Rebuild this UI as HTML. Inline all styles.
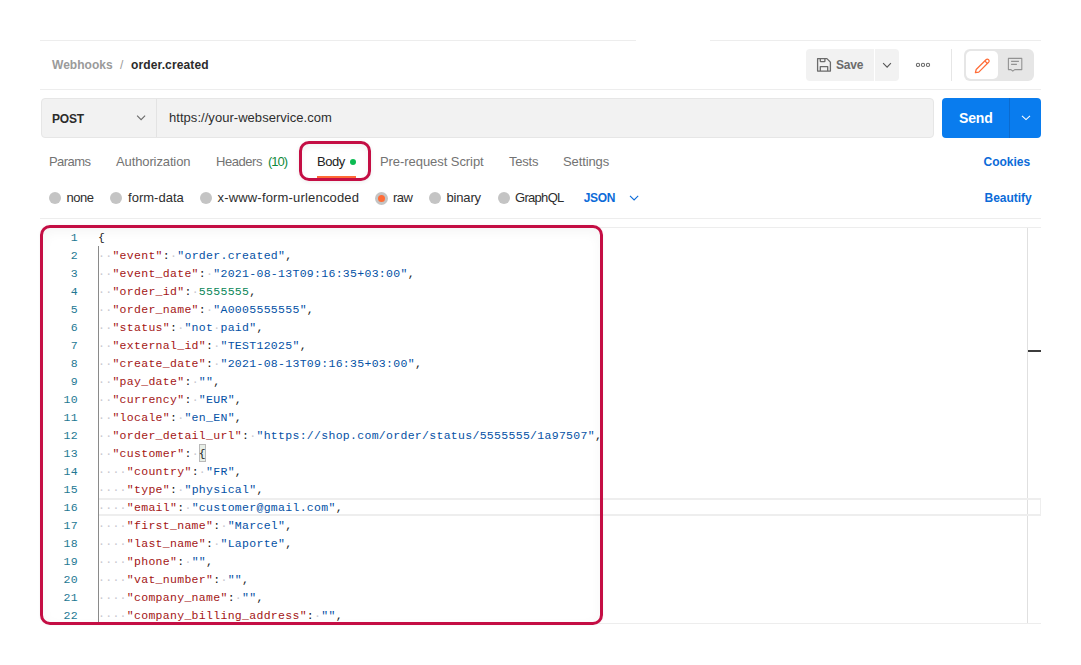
<!DOCTYPE html>
<html><head><meta charset="utf-8">
<style>
html,body{margin:0;padding:0;}
body{width:1081px;height:665px;overflow:hidden;background:#fff;position:relative;font-family:"Liberation Sans",sans-serif;}
.a{position:absolute;}
.t{position:absolute;white-space:pre;line-height:0;height:0;}
.hl{position:absolute;height:1px;background:#ededed;}
.radio{position:absolute;width:12px;height:12px;border-radius:50%;background:#c4c4c4;}
.ln{position:absolute;left:40px;width:38px;text-align:right;height:18px;line-height:18px;font:11.5px "Liberation Mono",monospace;letter-spacing:0.3px;color:#237893;}
.cl{position:absolute;left:98px;height:18px;line-height:18px;font:11.5px "Liberation Mono",monospace;letter-spacing:0.3px;white-space:pre;color:#212121;}
.k{color:#a31515;}
.s{color:#0451a5;}
.n{color:#098658;}
.p{color:#212121;}
.ws{color:#c8c8d0;}
.pb{color:#212121;}
svg{position:absolute;overflow:visible;}
</style></head><body>
<!-- horizontal rules -->
<div class="hl" style="left:40px;top:40px;width:596px;"></div>
<div class="hl" style="left:710px;top:40px;width:331px;"></div>
<div class="hl" style="left:40px;top:89px;width:1001px;"></div>
<div class="hl" style="left:40px;top:218px;width:1001px;"></div>

<!-- save group -->
<div class="a" style="left:806px;top:49px;width:68px;height:32px;background:#f2f2f2;border-radius:4px 0 0 4px;"></div>
<div class="a" style="left:875px;top:49px;width:24px;height:32px;background:#f2f2f2;border-radius:0 4px 4px 0;"></div>
<svg style="left:816px;top:57px" width="16" height="16" viewBox="0 0 16 16" fill="none" stroke="#6b6b6b" stroke-width="1.3" stroke-linejoin="round">
  <path d="M1.6 1.6H10.9L14.4 5.1V14.1H1.6Z"/>
  <path d="M4.3 1.6V4.2Q4.3 4.7 4.8 4.7H8.4Q8.9 4.7 8.9 4.2V1.6"/>
  <path d="M4.3 14.1V9.6H11.7V14.1"/>
</svg>
<svg style="left:878px;top:56px" width="18" height="18" viewBox="0 0 18 18" fill="none" stroke="#555" stroke-width="1.1">
  <path d="M5.1 7.2L9.1 11.1L12.9 7.2"/>
</svg>
<svg style="left:910px;top:58px" width="24" height="14" viewBox="0 0 24 14" fill="none" stroke="#6b6b6b" stroke-width="1.1">
  <circle cx="8" cy="6.9" r="1.6"/><circle cx="13" cy="6.9" r="1.6"/><circle cx="18" cy="6.9" r="1.6"/>
</svg>
<div class="a" style="left:951px;top:49px;width:1px;height:32px;background:#e6e6e6;"></div>
<div class="a" style="left:964px;top:49px;width:70px;height:32px;background:#e6e6e6;border-radius:6px;"></div>
<div class="a" style="left:966px;top:51px;width:32px;height:28px;background:#fff;border-radius:5px;"></div>
<svg style="left:971.5px;top:55.5px" width="20" height="20" viewBox="0 0 20 20" fill="none" stroke="#ff6c37" stroke-width="1.25" stroke-linejoin="round">
  <path d="M3.4 16.6L4.2 13.5L14 3.7Q15.3 2.4 16.6 3.7Q17.9 5 16.6 6.3L6.8 16.1Z"/>
  <path d="M12.8 4.9L15.4 7.5"/>
</svg>
<svg style="left:1006px;top:56px" width="18" height="18" viewBox="0 0 18 18" fill="none" stroke="#939393" stroke-width="1.1" stroke-linejoin="round">
  <path d="M2.4 2.4H15.8V13.6H8.7L6.8 15.2L5 13.6H2.4Z"/>
  <path d="M5.1 5.4H12.9M5.1 8.4H10.9"/>
</svg>

<!-- url bar -->
<div class="a" style="left:41px;top:98px;width:891px;height:38px;background:#f2f2f2;border:1px solid #e6e6e6;border-radius:4px;"></div>
<div class="a" style="left:156px;top:99px;width:1px;height:38px;background:#e3e3e3;"></div>
<svg style="left:132px;top:110px" width="18" height="14" viewBox="0 0 18 14" fill="none" stroke="#6b6b6b" stroke-width="1.1">
  <path d="M5.1 5.6L9.1 9.6L13.1 5.6"/>
</svg>
<div class="a" style="left:942px;top:98px;width:99px;height:40px;background:#097cee;border-radius:4px;"></div>
<div class="a" style="left:1009px;top:98px;width:1px;height:40px;background:#0a6bd0;"></div>
<svg style="left:1017px;top:111px" width="18" height="14" viewBox="0 0 18 14" fill="none" stroke="#fff" stroke-width="1.1">
  <path d="M5 4.8L9 8.6L13 4.8"/>
</svg>

<!-- tabs -->
<div class="a" style="left:317px;top:176px;width:39px;height:2px;background:#ff6c37;"></div>
<div class="a" style="left:350px;top:159px;width:6px;height:6px;border-radius:50%;background:#0cbb52;"></div>
<div class="a" style="left:299px;top:141px;width:66px;height:34px;border:3px solid #c40e44;border-radius:10px;box-shadow:0 1px 4px rgba(0,0,0,0.08), inset 0 3px 6px rgba(0,0,0,0.05);"></div>

<!-- radios -->
<div class="radio" style="left:49px;top:191.5px"></div>
<div class="radio" style="left:110px;top:191.5px"></div>
<div class="radio" style="left:200px;top:191.5px"></div>
<div class="radio" style="left:375px;top:192px;width:13px;height:13px;"></div>
<div class="a" style="left:378px;top:195px;width:7px;height:7px;border-radius:50%;background:#ff6c37;"></div>
<div class="radio" style="left:429px;top:192px"></div>
<div class="radio" style="left:497.5px;top:192px"></div>
<svg style="left:626px;top:192px" width="16" height="12" viewBox="0 0 16 12" fill="none" stroke="#0b6bd8" stroke-width="1.1">
  <path d="M4 3.8L8.1 7.9L12.2 3.8"/>
</svg>

<div class="t" id="t0" style="left:52px;top:64.84px;font:700 12px/0 'Liberation Sans', sans-serif;color:#9a9a9a;letter-spacing:0.021px">Webhooks</div>
<div class="t" id="t1" style="left:120px;top:64.84px;font:400 12px/0 'Liberation Sans', sans-serif;color:#9a9a9a;letter-spacing:0.000px">/</div>
<div class="t" id="t2" style="left:131px;top:64.84px;font:700 12px/0 'Liberation Sans', sans-serif;color:#2b2b2b;letter-spacing:0.129px">order.created</div>
<div class="t" id="t3" style="left:836px;top:64.84px;font:700 12px/0 'Liberation Sans', sans-serif;color:#6b6b6b;letter-spacing:-0.210px">Save</div>
<div class="t" id="t4" style="left:52px;top:118.84px;font:700 12px/0 'Liberation Sans', sans-serif;color:#2b2b2b;letter-spacing:-0.224px">POST</div>
<div class="t" id="t5" style="left:169px;top:118.49px;font:400 13px/0 'Liberation Sans', sans-serif;color:#2e2e2e;letter-spacing:0.041px">https://your-webservice.com</div>
<div class="t" id="t6" style="left:959px;top:118.15px;font:700 14px/0 'Liberation Sans', sans-serif;color:#ffffff;letter-spacing:-0.178px">Send</div>
<div class="t" id="t7" style="left:49px;top:162.49px;font:400 13px/0 'Liberation Sans', sans-serif;color:#737373;letter-spacing:-0.579px">Params</div>
<div class="t" id="t8" style="left:116px;top:162.49px;font:400 13px/0 'Liberation Sans', sans-serif;color:#737373;letter-spacing:-0.116px">Authorization</div>
<div class="t" id="t9" style="left:216px;top:162.49px;font:400 13px/0 'Liberation Sans', sans-serif;color:#737373;letter-spacing:-0.440px">Headers</div>
<div class="t" id="t10" style="left:268px;top:162.49px;font:400 13px/0 'Liberation Sans', sans-serif;color:#0f8a3c;letter-spacing:-1.042px">(10)</div>
<div class="t" id="t11" style="left:317px;top:162.49px;font:400 13px/0 'Liberation Sans', sans-serif;color:#212121;letter-spacing:-0.480px">Body</div>
<div class="t" id="t12" style="left:380px;top:162.49px;font:400 13px/0 'Liberation Sans', sans-serif;color:#737373;letter-spacing:-0.063px">Pre-request Script</div>
<div class="t" id="t13" style="left:509px;top:162.49px;font:400 13px/0 'Liberation Sans', sans-serif;color:#737373;letter-spacing:-0.236px">Tests</div>
<div class="t" id="t14" style="left:563px;top:162.49px;font:400 13px/0 'Liberation Sans', sans-serif;color:#737373;letter-spacing:-0.112px">Settings</div>
<div class="t" id="t15" style="left:983.5px;top:161.84px;font:700 12px/0 'Liberation Sans', sans-serif;color:#0b6bd8;letter-spacing:-0.015px">Cookies</div>
<div class="t" id="t16" style="left:66.5px;top:198.49px;font:400 13px/0 'Liberation Sans', sans-serif;color:#2e2e2e;letter-spacing:-0.441px">none</div>
<div class="t" id="t17" style="left:128px;top:198.49px;font:400 13px/0 'Liberation Sans', sans-serif;color:#2e2e2e;letter-spacing:0.020px">form-data</div>
<div class="t" id="t18" style="left:217.5px;top:198.49px;font:400 13px/0 'Liberation Sans', sans-serif;color:#2e2e2e;letter-spacing:0.176px">x-www-form-urlencoded</div>
<div class="t" id="t19" style="left:393px;top:198.49px;font:400 13px/0 'Liberation Sans', sans-serif;color:#2e2e2e;letter-spacing:-0.477px">raw</div>
<div class="t" id="t20" style="left:446.5px;top:198.49px;font:400 13px/0 'Liberation Sans', sans-serif;color:#2e2e2e;letter-spacing:-0.164px">binary</div>
<div class="t" id="t21" style="left:515px;top:198.49px;font:400 13px/0 'Liberation Sans', sans-serif;color:#2e2e2e;letter-spacing:-0.697px">GraphQL</div>
<div class="t" id="t22" style="left:583.7px;top:197.84px;font:700 12px/0 'Liberation Sans', sans-serif;color:#0b6bd8;letter-spacing:-0.296px">JSON</div>
<div class="t" id="t23" style="left:984.5px;top:197.84px;font:700 12px/0 'Liberation Sans', sans-serif;color:#0b6bd8;letter-spacing:-0.021px">Beautify</div>

<!-- editor -->
<div class="hl" style="left:598px;top:227px;width:443px;"></div>
<div class="hl" style="left:598px;top:623px;width:443px;"></div>
<div class="a" style="left:1027px;top:228px;width:1px;height:395px;background:#e0e0e0;"></div>
<div class="a" style="left:1028px;top:350px;width:13px;height:2px;background:#3c3c3c;"></div>
<div class="a" style="left:99px;top:498px;width:941px;height:14px;border-top:2px solid #eeeeee;border-bottom:2px solid #eeeeee;border-right:1px solid #eeeeee;"></div>
<div class="a" style="left:98px;top:246px;width:1px;height:377px;background:#8a8a8a;"></div>
<div class="a" style="left:199px;top:444px;width:5px;height:16px;border:1px solid #b9b9b9;background:#e8efe8;"></div>
<div class="ln" style="top:231px">1</div><div class="cl" style="top:231px"><span class="p">{</span></div>
<div class="ln" style="top:249px">2</div><div class="cl" style="top:249px"><span class="ws">··</span><span class="k">&quot;event&quot;</span><span class="p">:</span><span class="ws">·</span><span class="s">&quot;order.created&quot;</span><span class="p">,</span></div>
<div class="ln" style="top:267px">3</div><div class="cl" style="top:267px"><span class="ws">··</span><span class="k">&quot;event_date&quot;</span><span class="p">:</span><span class="ws">·</span><span class="s">&quot;2021-08-13T09:16:35+03:00&quot;</span><span class="p">,</span></div>
<div class="ln" style="top:285px">4</div><div class="cl" style="top:285px"><span class="ws">··</span><span class="k">&quot;order_id&quot;</span><span class="p">:</span><span class="ws">·</span><span class="n">5555555</span><span class="p">,</span></div>
<div class="ln" style="top:303px">5</div><div class="cl" style="top:303px"><span class="ws">··</span><span class="k">&quot;order_name&quot;</span><span class="p">:</span><span class="ws">·</span><span class="s">&quot;A0005555555&quot;</span><span class="p">,</span></div>
<div class="ln" style="top:321px">6</div><div class="cl" style="top:321px"><span class="ws">··</span><span class="k">&quot;status&quot;</span><span class="p">:</span><span class="ws">·</span><span class="s">&quot;not</span><span class="ws">·</span><span class="s">paid&quot;</span><span class="p">,</span></div>
<div class="ln" style="top:339px">7</div><div class="cl" style="top:339px"><span class="ws">··</span><span class="k">&quot;external_id&quot;</span><span class="p">:</span><span class="ws">·</span><span class="s">&quot;TEST12025&quot;</span><span class="p">,</span></div>
<div class="ln" style="top:357px">8</div><div class="cl" style="top:357px"><span class="ws">··</span><span class="k">&quot;create_date&quot;</span><span class="p">:</span><span class="ws">·</span><span class="s">&quot;2021-08-13T09:16:35+03:00&quot;</span><span class="p">,</span></div>
<div class="ln" style="top:375px">9</div><div class="cl" style="top:375px"><span class="ws">··</span><span class="k">&quot;pay_date&quot;</span><span class="p">:</span><span class="ws">·</span><span class="s">&quot;&quot;</span><span class="p">,</span></div>
<div class="ln" style="top:393px">10</div><div class="cl" style="top:393px"><span class="ws">··</span><span class="k">&quot;currency&quot;</span><span class="p">:</span><span class="ws">·</span><span class="s">&quot;EUR&quot;</span><span class="p">,</span></div>
<div class="ln" style="top:411px">11</div><div class="cl" style="top:411px"><span class="ws">··</span><span class="k">&quot;locale&quot;</span><span class="p">:</span><span class="ws">·</span><span class="s">&quot;en_EN&quot;</span><span class="p">,</span></div>
<div class="ln" style="top:429px">12</div><div class="cl" style="top:429px"><span class="ws">··</span><span class="k">&quot;order_detail_url&quot;</span><span class="p">:</span><span class="ws">·</span><span class="s">&quot;https://shop.com/order/status/5555555/1a97507&quot;</span><span class="p">,</span></div>
<div class="ln" style="top:447px">13</div><div class="cl" style="top:447px"><span class="ws">··</span><span class="k">&quot;customer&quot;</span><span class="p">:</span><span class="ws">·</span><span class="pb">{</span></div>
<div class="ln" style="top:465px">14</div><div class="cl" style="top:465px"><span class="ws">····</span><span class="k">&quot;country&quot;</span><span class="p">:</span><span class="ws">·</span><span class="s">&quot;FR&quot;</span><span class="p">,</span></div>
<div class="ln" style="top:483px">15</div><div class="cl" style="top:483px"><span class="ws">····</span><span class="k">&quot;type&quot;</span><span class="p">:</span><span class="ws">·</span><span class="s">&quot;physical&quot;</span><span class="p">,</span></div>
<div class="ln" style="top:501px">16</div><div class="cl" style="top:501px"><span class="ws">····</span><span class="k">&quot;email&quot;</span><span class="p">:</span><span class="ws">·</span><span class="s">&quot;customer@gmail.com&quot;</span><span class="p">,</span></div>
<div class="ln" style="top:519px">17</div><div class="cl" style="top:519px"><span class="ws">····</span><span class="k">&quot;first_name&quot;</span><span class="p">:</span><span class="ws">·</span><span class="s">&quot;Marcel&quot;</span><span class="p">,</span></div>
<div class="ln" style="top:537px">18</div><div class="cl" style="top:537px"><span class="ws">····</span><span class="k">&quot;last_name&quot;</span><span class="p">:</span><span class="ws">·</span><span class="s">&quot;Laporte&quot;</span><span class="p">,</span></div>
<div class="ln" style="top:555px">19</div><div class="cl" style="top:555px"><span class="ws">····</span><span class="k">&quot;phone&quot;</span><span class="p">:</span><span class="ws">·</span><span class="s">&quot;&quot;</span><span class="p">,</span></div>
<div class="ln" style="top:573px">20</div><div class="cl" style="top:573px"><span class="ws">····</span><span class="k">&quot;vat_number&quot;</span><span class="p">:</span><span class="ws">·</span><span class="s">&quot;&quot;</span><span class="p">,</span></div>
<div class="ln" style="top:591px">21</div><div class="cl" style="top:591px"><span class="ws">····</span><span class="k">&quot;company_name&quot;</span><span class="p">:</span><span class="ws">·</span><span class="s">&quot;&quot;</span><span class="p">,</span></div>
<div class="ln" style="top:609px">22</div><div class="cl" style="top:609px"><span class="ws">····</span><span class="k">&quot;company_billing_address&quot;</span><span class="p">:</span><span class="ws">·</span><span class="s">&quot;&quot;</span><span class="p">,</span></div>

<div class="a" style="left:40px;top:225px;width:557px;height:394px;border:3px solid #c40e44;border-radius:10px;box-shadow:0 0 3px rgba(0,0,0,0.05), inset 0 4px 12px rgba(0,0,0,0.04);"></div>
</body></html>
